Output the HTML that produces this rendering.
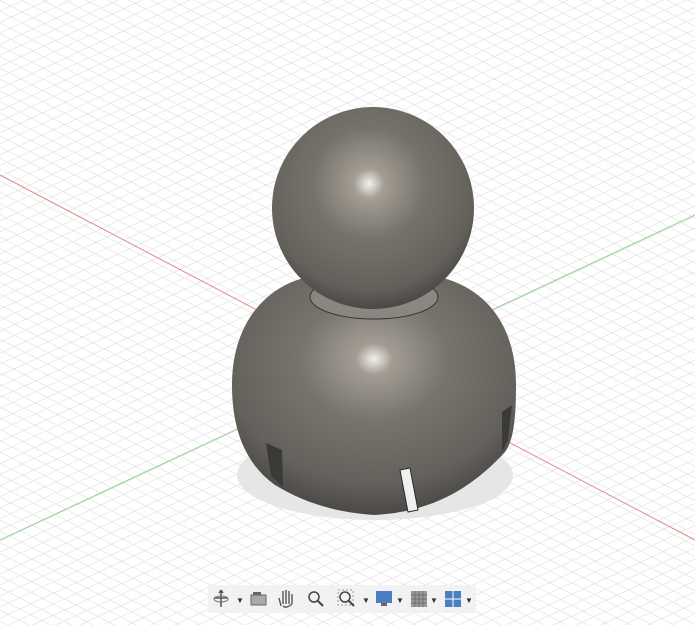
<!DOCTYPE html>
<html><head><style>
html,body{margin:0;padding:0;background:#fff;width:695px;height:625px;overflow:hidden;font-family:"Liberation Sans",sans-serif}
</style></head><body>
<svg width="695" height="625" viewBox="0 0 695 625" xmlns="http://www.w3.org/2000/svg">
<defs>
<pattern id="g1" width="20" height="20" patternUnits="userSpaceOnUse" patternTransform="rotate(27.7)">
<line x1="0" y1="0" x2="20" y2="0" stroke="#d6d6d6" stroke-width="1"/><line x1="0" y1="10" x2="20" y2="10" stroke="#ececec" stroke-width="1"/></pattern>
<pattern id="g2" width="20" height="20" patternUnits="userSpaceOnUse" patternTransform="rotate(-25)">
<line x1="0" y1="0" x2="20" y2="0" stroke="#d6d6d6" stroke-width="1"/><line x1="0" y1="10" x2="20" y2="10" stroke="#ececec" stroke-width="1"/></pattern>
<radialGradient id="head" cx="0.48" cy="0.38" r="0.62">
<stop offset="0" stop-color="#f4f2ee"/><stop offset="0.12" stop-color="#a39d93"/><stop offset="0.45" stop-color="#76726b"/><stop offset="0.85" stop-color="#63605b"/><stop offset="1" stop-color="#4a4845"/></radialGradient>
<radialGradient id="body" cx="0.5" cy="0.35" r="0.65">
<stop offset="0" stop-color="#f2f0ec"/><stop offset="0.1" stop-color="#a29c93"/><stop offset="0.4" stop-color="#77736d"/><stop offset="0.8" stop-color="#64615c"/><stop offset="1" stop-color="#4a4845"/></radialGradient>
</defs>
<rect width="695" height="625" fill="#fff"/>
<rect width="695" height="625" fill="url(#g1)"/>
<rect width="695" height="625" fill="url(#g2)"/>
<line x1="0" y1="175" x2="695" y2="540" stroke="#e08a8a" stroke-width="1"/>
<line x1="0" y1="540" x2="695" y2="215" stroke="#8fd08f" stroke-width="1"/>
<ellipse cx="375" cy="475" rx="138" ry="45" fill="#e6e6e6"/>
<path d="M232 385 C232 320 270 280 320 275 L428 275 C480 282 516 320 516 385 C516 415 514 440 505 452 C470 490 430 512 374 515 C330 512 300 500 275 485 C240 460 232 420 232 385 Z" fill="url(#body)"/>
<path d="M266 443 L282 450 L283 487 L271 476 Z" fill="#3a3a38"/>
<path d="M400 470 L410 468 L418 510 L408 512 Z" fill="#f0f0f0" stroke="#2a2a2a" stroke-width="1"/>
<path d="M502 412 L512 405 L508 440 L502 452 Z" fill="#3a3a38"/>
<ellipse cx="374" cy="297" rx="64" ry="22" fill="#8a8680" stroke="#333" stroke-width="1"/>
<circle cx="373" cy="208" r="101" fill="url(#head)"/>
<rect x="208" y="585" width="268" height="28" fill="#f2f2f2" rx="2"/>
<g fill="#333">
<path d="M221 590 V607 M214 598 H228 M221 590 l-2 3 M221 590 l2 3" stroke="#555" stroke-width="1.5" fill="none"/>
<ellipse cx="221" cy="599" rx="7" ry="3" fill="none" stroke="#777"/>
<text x="236" y="603" font-size="8">▼</text>
<rect x="251" y="595" width="15" height="10" fill="#aaa" stroke="#666"/><rect x="253" y="592" width="8" height="3" fill="#666"/>
<path d="M281 606 L279 598 M283 604 L283 591 M286 604 L286 590 M289 604 L289 591 M292 604 L292 594 M283 606 Q286 609 292 604" stroke="#555" stroke-width="1.4" fill="none"/>
<circle cx="314" cy="597" r="5" fill="none" stroke="#444" stroke-width="1.5"/><line x1="318" y1="601" x2="323" y2="606" stroke="#444" stroke-width="2"/>
<rect x="338" y="590" width="15" height="15" fill="none" stroke="#999" stroke-dasharray="2"/>
<circle cx="345" cy="597" r="5" fill="none" stroke="#444" stroke-width="1.5"/><line x1="349" y1="601" x2="354" y2="606" stroke="#444" stroke-width="2"/>
<text x="362" y="603" font-size="8">▼</text>
<rect x="376" y="591" width="16" height="12" fill="#4a7fc0"/><rect x="381" y="603" width="6" height="3" fill="#666"/>
<text x="396" y="603" font-size="8">▼</text>
<rect x="411" y="591" width="16" height="16" fill="#999"/>
<path d="M415 591V607M419 591V607M423 591V607M411 595H427M411 599H427M411 603H427" stroke="#666" stroke-width="0.7"/>
<text x="430" y="603" font-size="8">▼</text>
<rect x="445" y="591" width="16" height="16" fill="#4a7fc0"/><line x1="453" y1="591" x2="453" y2="607" stroke="#fff"/><line x1="445" y1="599" x2="461" y2="599" stroke="#fff"/>
<text x="465" y="603" font-size="8">▼</text>
</g>
</svg>
</body></html>
